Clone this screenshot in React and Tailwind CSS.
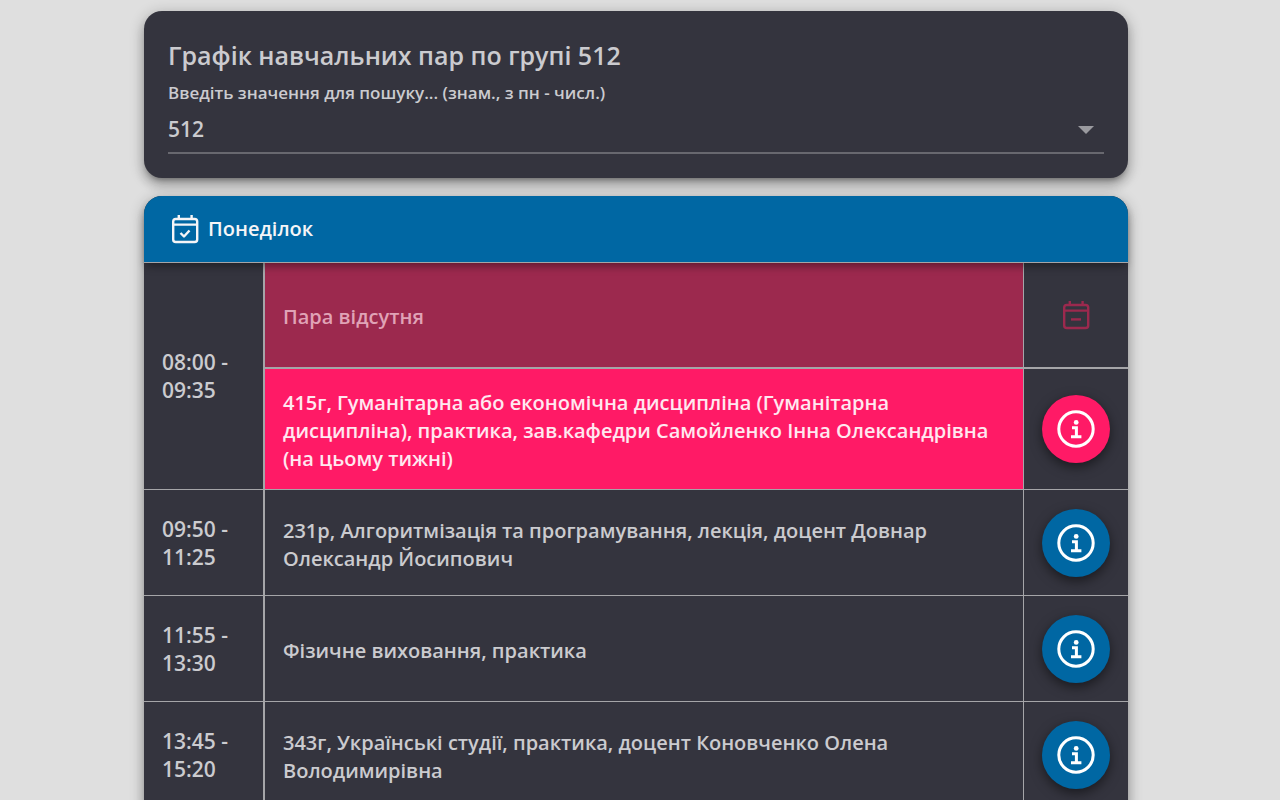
import React, { useState } from 'react';

const GROUPS = ['511', '512', '513'];

const LESSONS = [
  {
    time: '08:00 - 09:35',
    entries: [
      { text: 'Пара відсутня', status: 'missing' },
      {
        text: '415г, Гуманітарна або економічна дисципліна (Гуманітарна дисципліна), практика, зав.кафедри Самойленко Інна Олександрівна (на цьому тижні)',
        status: 'current',
      },
    ],
  },
  {
    time: '09:50 - 11:25',
    entries: [{ text: '231р, Алгоритмізація та програмування, лекція, доцент Довнар Олександр Йосипович', status: 'regular' }],
  },
  {
    time: '11:55 - 13:30',
    entries: [{ text: 'Фізичне виховання, практика', status: 'regular' }],
  },
  {
    time: '13:45 - 15:20',
    entries: [{ text: '343г, Українські студії, практика, доцент Коновченко Олена Володимирівна', status: 'regular' }],
  },
];

const CELL_STYLES = {
  missing: 'bg-[#9c294e] text-[#e0a3b6]',
  current: 'bg-[#ff1a66] text-[#ffe8f0]',
  regular: 'text-[#cbcbcf]',
};

const CARD_SHADOW = 'shadow-[0_5px_5px_-3px_rgba(0,0,0,0.3),0_8px_10px_1px_rgba(0,0,0,0.14),0_3px_14px_2px_rgba(0,0,0,0.2)]';

function CalendarIcon({ children, className = '' }) {
  return (
    <svg
      width="28"
      height="30"
      viewBox="0 0 28 30"
      fill="none"
      stroke="currentColor"
      strokeWidth="2.4"
      strokeLinejoin="round"
      className={className}
      aria-hidden="true"
    >
      <rect x="2.2" y="5" width="24" height="23" rx="2.6" />
      <path d="M2 10.6h24M7.8 5V1M20.6 5V1" />
      {children}
    </svg>
  );
}

function InfoIcon() {
  return (
    <svg width="38" height="38" viewBox="0 0 38 38" fill="none" stroke="currentColor" aria-hidden="true">
      <circle cx="19" cy="19" r="17.2" strokeWidth="3" />
      <circle cx="19.2" cy="12.4" r="2.4" fill="currentColor" stroke="none" />
      <path d="M15 17.8h4.4v8.6M14 26.8h10.4" strokeWidth="3" />
    </svg>
  );
}

function InfoButton({ current }) {
  return (
    <button
      type="button"
      aria-label="Детальніше"
      className={`w-[68px] h-[68px] rounded-full text-white inline-flex items-center justify-center align-top shadow-[0_4px_12px_rgba(0,0,0,0.5)] ${
        current ? 'bg-[#ff1a66]' : 'bg-[#0067a3]'
      }`}
    >
      <InfoIcon />
    </button>
  );
}

function LessonRows({ lesson }) {
  return lesson.entries.map((entry, index) => {
    const isLast = index === lesson.entries.length - 1;
    const border = isLast ? 'border-b' : 'border-b-2';

    return (
      <tr key={index}>
        {index === 0 && (
          <th
            scope="row"
            rowSpan={lesson.entries.length}
            className="w-[121px] p-[18px] border-r-2 border-b border-[#a5a5a8] text-left font-semibold text-[21px] text-[#cbcbcf]"
          >
            {lesson.time}
          </th>
        )}
        <td className={`px-[18px] pt-5 pb-4 border-r border-[#a5a5a8] ${border} ${CELL_STYLES[entry.status]}`}>{entry.text}</td>
        <td className={`w-[104px] h-[106px] p-[18px] text-center border-[#a5a5a8] ${border}`}>
          {entry.status === 'missing' ? (
            <CalendarIcon className="inline-block text-[#9c294e]">
              <path d="M9 19.4h10" />
            </CalendarIcon>
          ) : (
            <InfoButton current={entry.status === 'current'} />
          )}
        </td>
      </tr>
    );
  });
}

export default function App() {
  const [group, setGroup] = useState('512');

  return (
    <div className="min-h-screen bg-[#dfdfdf] pl-36 pr-[152px] pt-[11px] overflow-hidden font-['Open_Sans','Noto_Sans',sans-serif] font-semibold">
      {/* Search card */}
      <section className={`bg-[#34343e] text-[#cbcbcf] rounded-[18px] p-6 ${CARD_SHADOW}`}>
        <h1 className="text-[25px] leading-10">Графік навчальних пар по групі {group}</h1>
        <label htmlFor="group" className="block text-[17px] leading-9">
          Введіть значення для пошуку... (знам., з пн - числ.)
        </label>
        <div className="relative">
          <select
            id="group"
            value={group}
            onChange={(e) => setGroup(e.target.value)}
            className="block w-full h-[43px] pb-1 appearance-none bg-transparent border-b-2 border-[#68686f] text-[21px] outline-none"
          >
            {GROUPS.map((name) => (
              <option key={name} value={name}>{name}</option>
            ))}
          </select>
          <svg width="16" height="8" viewBox="0 0 16 8" className="absolute right-[10px] top-[15px] pointer-events-none" aria-hidden="true">
            <path d="M0 0h16L8 8z" fill="#9a9a9f" />
          </svg>
        </div>
      </section>

      {/* Day schedule */}
      <section className={`mt-[18px] bg-[#34343e] rounded-t-[18px] ${CARD_SHADOW}`}>
        <header className="relative z-10 flex items-center gap-[9px] h-[67px] px-[27px] bg-[#0067a3] border-b border-[#a5a5a8] rounded-t-[18px] text-[#f5f5f7] shadow-[0_5px_8px_-2px_rgba(0,0,0,0.4)]">
          <CalendarIcon>
            <path d="M9.5 19l3.5 3.5 5.5-6" />
          </CalendarIcon>
          <h2 className="text-xl leading-7">Понеділок</h2>
        </header>
        <table className="w-full table-auto border-separate border-spacing-0 text-xl leading-7">
          <tbody>
            {LESSONS.map((lesson) => (
              <LessonRows key={lesson.time} lesson={lesson} />
            ))}
          </tbody>
        </table>
      </section>
    </div>
  );
}
